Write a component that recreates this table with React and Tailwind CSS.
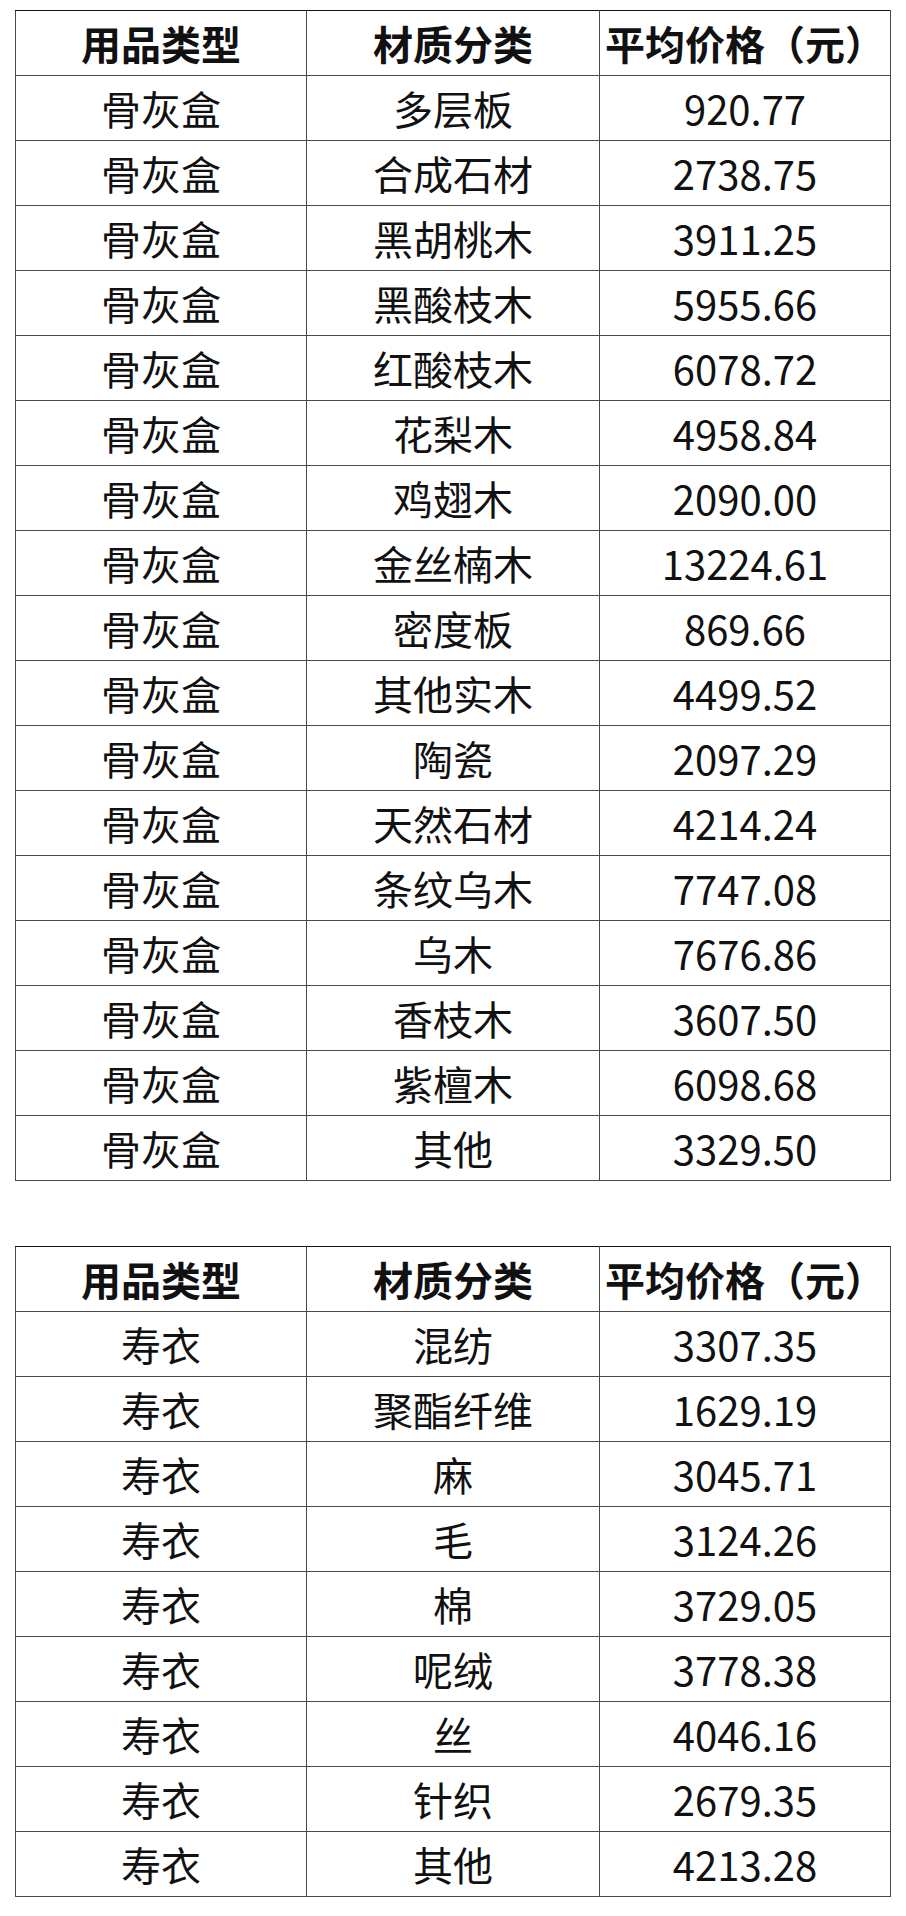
import React from "react";

const t1 = [
  ["多层板", "920.77"],
  ["合成石材", "2738.75"],
  ["黑胡桃木", "3911.25"],
  ["黑酸枝木", "5955.66"],
  ["红酸枝木", "6078.72"],
  ["花梨木", "4958.84"],
  ["鸡翅木", "2090.00"],
  ["金丝楠木", "13224.61"],
  ["密度板", "869.66"],
  ["其他实木", "4499.52"],
  ["陶瓷", "2097.29"],
  ["天然石材", "4214.24"],
  ["条纹乌木", "7747.08"],
  ["乌木", "7676.86"],
  ["香枝木", "3607.50"],
  ["紫檀木", "6098.68"],
  ["其他", "3329.50"],
];

const t2 = [
  ["混纺", "3307.35"],
  ["聚酯纤维", "1629.19"],
  ["麻", "3045.71"],
  ["毛", "3124.26"],
  ["棉", "3729.05"],
  ["呢绒", "3778.38"],
  ["丝", "4046.16"],
  ["针织", "2679.35"],
  ["其他", "4213.28"],
];

const cell = "border border-[#4a4a4a] h-[65px] p-0 text-center align-middle";

function Table({ type, rows }) {
  return (
    <table className="border-collapse table-fixed w-[875px]">
      <colgroup>
        <col className="w-[291px]" />
        <col className="w-[293px]" />
        <col className="w-[291px]" />
      </colgroup>
      <thead>
        <tr>
          <th className={cell + " border-t-[#111] font-bold"}>用品类型</th>
          <th className={cell + " border-t-[#111] font-bold"}>材质分类</th>
          <th className={cell + " border-t-[#111] font-bold"}>平均价格（元）</th>
        </tr>
      </thead>
      <tbody>
        {rows.map(([m, p], i) => (
          <tr key={i}>
            <td className={cell}>{type}</td>
            <td className={cell}>{m}</td>
            <td className={cell}>{p}</td>
          </tr>
        ))}
      </tbody>
    </table>
  );
}

export default function App() {
  return (
    <div
      className="bg-white w-[906px] min-h-[1916px] pt-[10px] pl-[15px] text-[40px] leading-none text-[#111]"
      style={{ fontFamily: '"Noto Sans CJK SC", "Noto Sans", sans-serif' }}
    >
      <Table type="骨灰盒" rows={t1} />
      <div className="h-[65px]" />
      <Table type="寿衣" rows={t2} />
    </div>
  );
}
